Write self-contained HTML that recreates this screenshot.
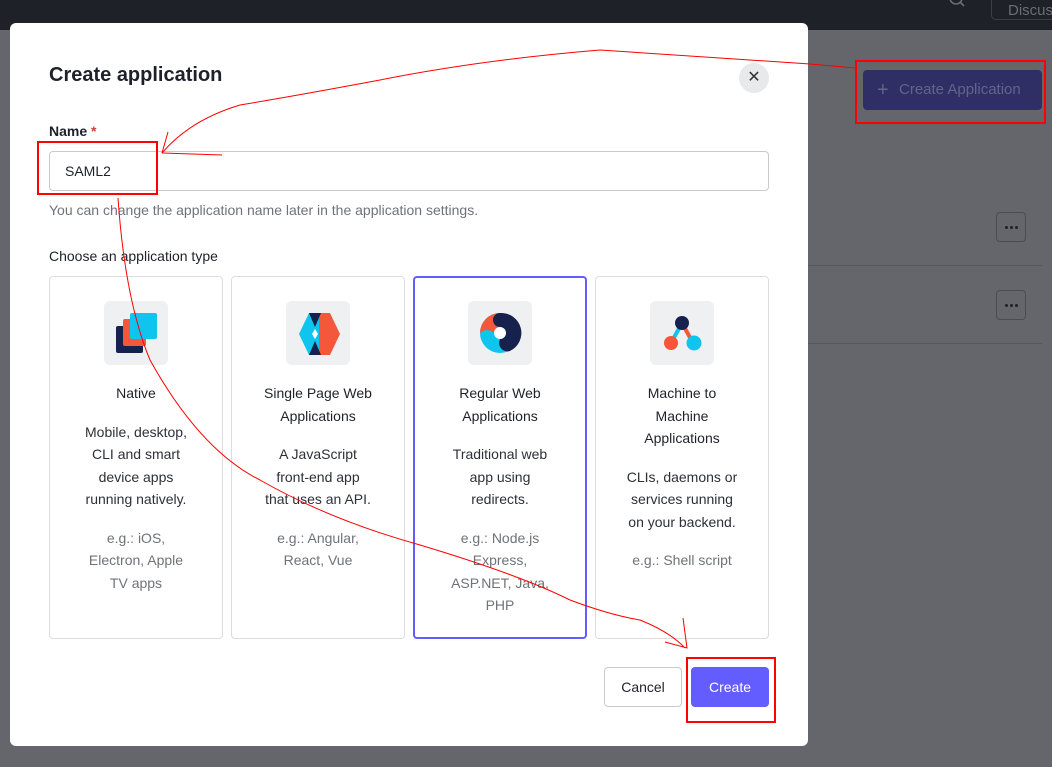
<!DOCTYPE html>
<html><head><meta charset="utf-8"><style>
*{box-sizing:border-box;margin:0;padding:0}
body{width:1052px;height:767px;overflow:hidden;background:#65666b;font-family:"Liberation Sans",sans-serif;position:relative;color:#1e212a}
.top{position:absolute;left:0;top:0;width:1052px;height:30px;background:#1f2129}
.abs{position:absolute}
.modal{position:absolute;left:10px;top:23px;width:798px;height:723px;background:#fff;border-radius:6px}
.card{position:absolute;top:276px;width:174px;height:363px;border:1px solid #dcdde0;border-radius:4px;text-align:center;font-size:14px;line-height:22.5px}
.card.sel{border:2px solid #635dff}
.ic{width:64px;height:64px;background:#eff0f2;border-radius:6px;margin:24px auto 0;position:relative}
.card.sel .ic{margin-top:23px}
.t{margin-top:17px;color:#1e212a}
.d{margin-top:16px;color:#2d3039}
.e{margin-top:16px;color:#6f727a}
.dots{position:absolute;width:30px;height:30px;border:1px solid #4a4c52;border-radius:4px}
.dots i{position:absolute;top:13px;width:3px;height:3px;border-radius:50%;background:#222}
</style></head><body>
<div class="top"></div>
<svg class="abs" style="left:948px;top:-6px" width="20" height="16"><circle cx="8" cy="4" r="6" fill="none" stroke="#6a6d74" stroke-width="1.6"/><line x1="12" y1="8" x2="16" y2="12" stroke="#6a6d74" stroke-width="1.6"/></svg>
<div class="abs" style="left:991px;top:-10px;width:80px;height:30px;border:1px solid #3b3e46;border-radius:5px;color:#6a6d74;font-size:15px;padding:11px 0 0 16px">Discuss</div>
<div class="abs" style="left:863px;top:70px;width:179px;height:40px;background:#2f2f66;border-radius:4px;color:#62648a;font-size:15px;line-height:40px;padding-left:36px">Create Application</div>
<div class="abs" style="left:877px;top:80px;color:#62648a;font-size:20px;line-height:20px">+</div>
<div class="dots" style="left:996px;top:212px"><i style="left:8px"></i><i style="left:13px"></i><i style="left:18px"></i></div>
<div class="dots" style="left:996px;top:290px"><i style="left:8px"></i><i style="left:13px"></i><i style="left:18px"></i></div>
<div class="abs" style="left:808px;top:265px;width:234px;height:1px;background:#56575c"></div>
<div class="abs" style="left:808px;top:343px;width:234px;height:1px;background:#56575c"></div>

<div class="modal"></div>
<div class="abs" style="left:49px;top:64px;font-size:20px;font-weight:bold;color:#1e212a">Create application</div>
<div class="abs" style="left:739px;top:63px;width:30px;height:30px;border-radius:50%;background:#e8e9eb;text-align:center;line-height:30px;font-size:16px;color:#333">✕</div>
<div class="abs" style="left:49px;top:123px;font-size:14px;font-weight:bold;color:#1e212a">Name <span style="color:#d03c38">*</span></div>
<div class="abs" style="left:49px;top:151px;width:720px;height:40px;border:1px solid #c9cace;border-radius:4px;font-size:14px;line-height:38px;padding-left:15px">SAML2</div>
<div class="abs" style="left:49px;top:202px;font-size:14px;color:#6f727a">You can change the application name later in the application settings.</div>
<div class="abs" style="left:49px;top:248px;font-size:14px;color:#1e212a">Choose an application type</div>

<div class="card" style="left:49px"><div class="ic">
<div class="abs" style="left:12px;top:25px;width:27px;height:27px;background:#16214d;border-radius:2px"></div>
<div class="abs" style="left:19px;top:18px;width:23px;height:27px;background:#f5573b;border-radius:2px"></div>
<div class="abs" style="left:26px;top:12px;width:27px;height:26px;background:#0fc4ed;border-radius:2px"></div>
</div><div class="t">Native</div><div class="d">Mobile, desktop,<br>CLI and smart<br>device apps<br>running natively.</div><div class="e">e.g.: iOS,<br>Electron, Apple<br>TV apps</div></div>

<div class="card" style="left:231px"><div class="ic"><svg width="64" height="64"><polygon points="23,12 33,12 33,54 23,54 13,33" fill="#0fc4ed"/><polygon points="33,12 44,12 54,33 44,54 33,54" fill="#f5573b"/><polygon points="23,12 35,12 29,26" fill="#16214d"/><polygon points="23,54 35,54 29,40" fill="#16214d"/><polygon points="29,28 32,33 29,38 26,33" fill="#fff"/></svg></div>
<div class="t">Single Page Web<br>Applications</div><div class="d">A JavaScript<br>front-end app<br>that uses an API.</div><div class="e">e.g.: Angular,<br>React, Vue</div></div>

<div class="card sel" style="left:413px"><div class="ic"><svg width="64" height="64"><circle cx="32" cy="32" r="20" fill="#0fc4ed"/><path d="M12 32 A20 20 0 0 1 32 12 A6 6 0 0 1 32 26 A6 6 0 0 0 26 32 Q19 26 12 32Z" fill="#f5573b"/><path d="M32 12 A20 20 0 0 1 42 50 A6 6 0 0 1 37 34 A6 6 0 0 0 32 26 A6 6 0 0 1 32 12Z" fill="#16214d"/><circle cx="32" cy="32" r="6" fill="#fff"/></svg></div>
<div class="t">Regular Web<br>Applications</div><div class="d">Traditional web<br>app using<br>redirects.</div><div class="e">e.g.: Node.js<br>Express,<br>ASP.NET, Java,<br>PHP</div></div>

<div class="card" style="left:595px"><div class="ic"><svg width="64" height="64"><line x1="32" y1="22" x2="21" y2="42" stroke="#0fc4ed" stroke-width="4"/><line x1="32" y1="22" x2="43" y2="42" stroke="#f5573b" stroke-width="4"/><circle cx="32" cy="22" r="7" fill="#16214d"/><circle cx="21" cy="42" r="7" fill="#f5573b"/><circle cx="44" cy="42" r="7.5" fill="#0fc4ed"/></svg></div>
<div class="t">Machine to<br>Machine<br>Applications</div><div class="d">CLIs, daemons or<br>services running<br>on your backend.</div><div class="e">e.g.: Shell script</div></div>

<div class="abs" style="left:604px;top:667px;width:78px;height:40px;border:1px solid #c9cace;border-radius:4px;text-align:center;line-height:38px;font-size:14px">Cancel</div>
<div class="abs" style="left:691px;top:667px;width:78px;height:40px;background:#635dff;border-radius:4px;text-align:center;line-height:40px;font-size:14px;color:#fff">Create</div>

<svg class="abs" style="left:0;top:0" width="1052" height="767" fill="none" stroke="#f00">
<rect x="856" y="61" width="189" height="62" stroke-width="2"/>
<rect x="38" y="142" width="119" height="52" stroke-width="2"/>
<rect x="687" y="658" width="88" height="64" stroke-width="2"/>
<path d="M855 68 L810 64 L600 50 Q480 60 380 80 Q300 95 240 105 Q190 120 162 153" stroke-width="1"/>
<path d="M162 153 L168 132 M162 153 L222 155" stroke-width="1"/>
<path d="M118 198 Q125 300 150 360 Q200 450 260 480 Q330 520 420 545 Q520 575 570 600 Q610 615 640 620 Q670 632 685 648 M665 642 L687 648 L683 618" stroke-width="1"/>
</svg>
</body></html>
